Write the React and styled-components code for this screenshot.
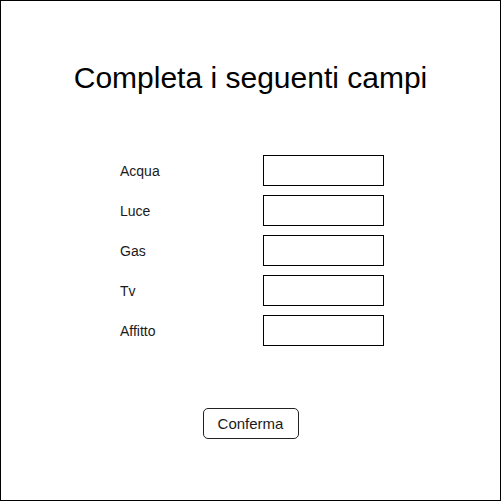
import styled, { createGlobalStyle } from "styled-components";

const GlobalStyle = createGlobalStyle`
  body {
    margin: 0;
    background: #fff;
    font-family: "Liberation Sans", Arial, sans-serif;
  }
`;

const Frame = styled.div`
  width: 501px;
  height: 501px;
  box-sizing: border-box;
  border: 1px solid #000;
  display: flex;
  flex-direction: column;
  align-items: center;
`;

const Title = styled.h1`
  margin: 59px 0 0;
  font-size: 30px;
  line-height: 36px;
  font-weight: 400;
  color: #000;
`;

const Form = styled.form`
  align-self: flex-start;
  margin: 59px 0 0 119px;
  display: grid;
  grid-template-columns: 143px 121px;
  grid-auto-rows: 31px;
  row-gap: 9px;
  align-items: center;
`;

const Label = styled.label`
  font-size: 14px;
  color: #1a1a1a;
`;

const Field = styled.input`
  box-sizing: border-box;
  width: 121px;
  height: 31px;
  margin: 0;
  padding: 0 6px;
  border: 1px solid #000;
  border-radius: 0;
  background: #fff;
  font: 14px "Liberation Sans", Arial, sans-serif;
  outline: none;
`;

const Button = styled.button`
  margin-top: 62px;
  box-sizing: border-box;
  width: 96px;
  height: 31px;
  border: 1px solid #222;
  border-radius: 5px;
  background: #fff;
  font: 15px "Liberation Sans", Arial, sans-serif;
  color: #1a1a1a;
  padding: 0;
`;

const fields = ["Acqua", "Luce", "Gas", "Tv", "Affitto"];

export default function App() {
  return (
    <>
      <GlobalStyle />
      <Frame>
        <Title>Completa i seguenti campi</Title>
        <Form>
          {fields.map((name) => [
            <Label key={name + "-l"} htmlFor={name}>
              {name}
            </Label>,
            <Field key={name + "-f"} id={name} type="text" />,
          ])}
        </Form>
        <Button type="button">Conferma</Button>
      </Frame>
    </>
  );
}
